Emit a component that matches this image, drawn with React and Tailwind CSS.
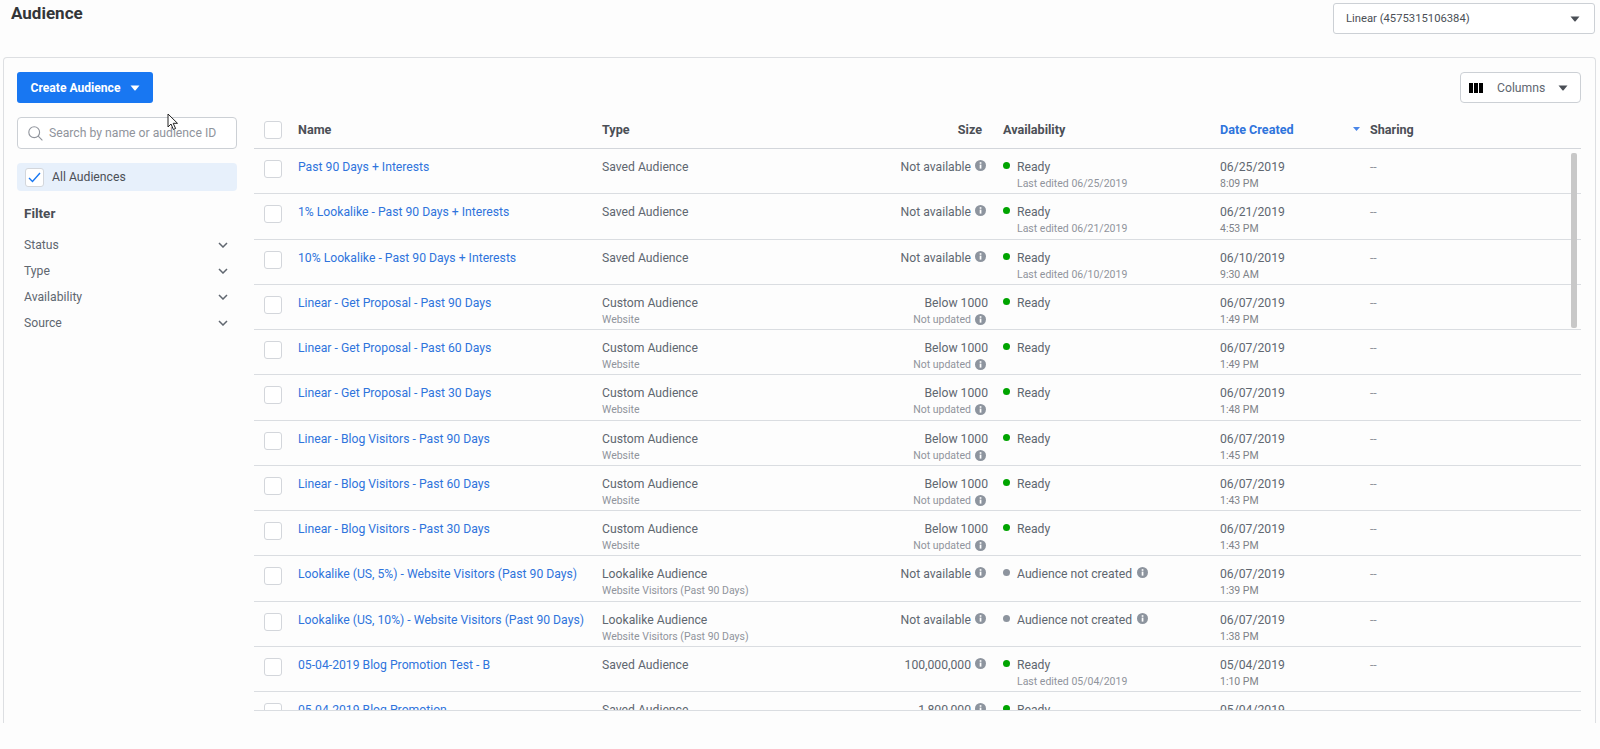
const rows = [
  { name: 'Past 90 Days + Interests', type: 'Saved Audience', size: 'Not available', sizeInfo: true, edited: '06/25/2019', date: '06/25/2019', time: '8:09 PM' },
  { name: '1% Lookalike - Past 90 Days + Interests', type: 'Saved Audience', size: 'Not available', sizeInfo: true, edited: '06/21/2019', date: '06/21/2019', time: '4:53 PM' },
  { name: '10% Lookalike - Past 90 Days + Interests', type: 'Saved Audience', size: 'Not available', sizeInfo: true, edited: '06/10/2019', date: '06/10/2019', time: '9:30 AM' },
  { name: 'Linear - Get Proposal - Past 90 Days', type: 'Custom Audience', sub: 'Website', size: 'Below 1000', updated: true, date: '06/07/2019', time: '1:49 PM' },
  { name: 'Linear - Get Proposal - Past 60 Days', type: 'Custom Audience', sub: 'Website', size: 'Below 1000', updated: true, date: '06/07/2019', time: '1:49 PM' },
  { name: 'Linear - Get Proposal - Past 30 Days', type: 'Custom Audience', sub: 'Website', size: 'Below 1000', updated: true, date: '06/07/2019', time: '1:48 PM' },
  { name: 'Linear - Blog Visitors - Past 90 Days', type: 'Custom Audience', sub: 'Website', size: 'Below 1000', updated: true, date: '06/07/2019', time: '1:45 PM' },
  { name: 'Linear - Blog Visitors - Past 60 Days', type: 'Custom Audience', sub: 'Website', size: 'Below 1000', updated: true, date: '06/07/2019', time: '1:43 PM' },
  { name: 'Linear - Blog Visitors - Past 30 Days', type: 'Custom Audience', sub: 'Website', size: 'Below 1000', updated: true, date: '06/07/2019', time: '1:43 PM' },
  { name: 'Lookalike (US, 5%) - Website Visitors (Past 90 Days)', type: 'Lookalike Audience', sub: 'Website Visitors (Past 90 Days)', size: 'Not available', sizeInfo: true, notCreated: true, date: '06/07/2019', time: '1:39 PM' },
  { name: 'Lookalike (US, 10%) - Website Visitors (Past 90 Days)', type: 'Lookalike Audience', sub: 'Website Visitors (Past 90 Days)', size: 'Not available', sizeInfo: true, notCreated: true, date: '06/07/2019', time: '1:38 PM' },
  { name: '05-04-2019 Blog Promotion Test - B', type: 'Saved Audience', size: '100,000,000', sizeInfo: true, edited: '05/04/2019', date: '05/04/2019', time: '1:10 PM' },
  { name: '05-04-2019 Blog Promotion', type: 'Saved Audience', size: '1,800,000', sizeInfo: true, edited: '05/04/2019', date: '05/04/2019', time: '1:07 PM' },
]

const filters = ['Status', 'Type', 'Availability', 'Source']

function Caret({ className }) {
  return (
    <svg width="10" height="6" viewBox="0 0 10 6" className={className}>
      <path d="M0.5 0.5h9L5.6 5.2a.8.8 0 0 1-1.2 0z" fill="currentColor" />
    </svg>
  )
}

function Info() {
  return (
    <svg width="11" height="11" viewBox="0 0 11 11" className="mt-[-3px] shrink-0">
      <circle cx="5.5" cy="5.5" r="5.5" fill="#8d949e" />
      <rect x="4.7" y="4.6" width="1.7" height="4" fill="#fff" />
      <rect x="4.7" y="2.2" width="1.7" height="1.6" fill="#fff" />
    </svg>
  )
}

function Box({ className = '' }) {
  return <div className={`size-[18px] rounded-[3px] border border-[#d3d6db] bg-white ${className}`} />
}

function Row({ row }) {
  return (
    <div className="grid h-[45.25px] shrink-0 grid-cols-[44px_304px_386px_15px_217px_150px_1fr] border-b border-[#dadde1] pt-[10px] text-[12.2px] leading-4">
      <Box className="mt-[1px] ml-[10px]" />
      <div className="whitespace-nowrap text-[#2f74dc]">{row.name}</div>
      <div className="col-span-1 flex justify-between">
        <div>
          <div>{row.type}</div>
          {row.sub && <div className="mt-[1px] text-[10.5px] text-[#90949c]">{row.sub}</div>}
        </div>
        <div className="text-right">
          <div className={row.sizeInfo ? 'flex items-center justify-end gap-[4px] pr-[2px]' : ''}>
            {row.size}
            {row.sizeInfo && <Info />}
          </div>
          {row.updated && (
            <div className="mt-[1px] flex items-center justify-end gap-[4px] pr-[2px] text-[10.5px] text-[#90949c]">
              Not updated
              <span className="mt-[2px] flex">
                <Info />
              </span>
            </div>
          )}
        </div>
      </div>
      <div />
      <div className="relative pl-[14px]">
        <span className={`absolute top-[3px] left-0 size-[7px] rounded-full ${row.notCreated ? 'bg-[#8d949e]' : 'bg-[#00a400]'}`} />
        {row.notCreated ? (
          <div className="flex items-center gap-[5px]">
            Audience not created
            <Info />
          </div>
        ) : (
          <div>Ready</div>
        )}
        {row.edited && <div className="mt-[1px] text-[10.5px] text-[#90949c]">Last edited {row.edited}</div>}
      </div>
      <div>
        <div>{row.date}</div>
        <div className="mt-[1px] text-[10.5px] text-[#7f8389]">{row.time}</div>
      </div>
      <div className="text-[#90949c]">--</div>
    </div>
  )
}

function App() {
  return (
    <div className="h-[749px] overflow-hidden bg-[#fdfdfd] font-['Roboto',sans-serif] text-[#606770]">
      <div className="flex h-[57px] items-start justify-between pr-[5px] pl-[11px]">
        <h1 className="text-[17px] leading-[27px] font-bold text-[#333538]">Audience</h1>
        <button className="mt-[3px] flex h-[31px] w-[262px] items-center justify-between rounded-[3px] border border-[#ccd0d5] bg-white pt-[1px] pr-[14px] pl-[12px] text-[11.25px] text-[#4b4f56]">
          Linear (4575315106384)
          <Caret className="text-[#4b4f56]" />
        </button>
      </div>

      <div className="relative mx-[3px] h-[666px] w-[1593px] rounded-t-[4px] border-x border-t border-[#dddfe2] pt-[14px] pr-[14px] pl-[13px]">
        <div className="flex h-[31px] items-center justify-between">
          <button className="flex h-[31px] w-[136px] items-center justify-center gap-[10px] rounded-[3px] bg-[#1877f2] pt-[1px] pl-[1px] text-[12.1px] font-bold text-white">
            Create Audience
            <Caret />
          </button>
          <button className="flex h-[31px] w-[121px] items-center rounded-[4px] border border-[#ccd0d5] bg-white pt-[1px] pl-[8px] text-[12.2px] text-[#606770]">
            <span className="flex gap-[1px]">
              <i className="block h-[10px] w-[4px] bg-black" />
              <i className="block h-[10px] w-[4px] bg-black" />
              <i className="block h-[10px] w-[4px] bg-black" />
            </span>
            <span className="ml-[14px]">Columns</span>
            <Caret className="ml-[13px] text-[#4b4f56]" />
          </button>
        </div>

        <div className="mt-[9px] flex gap-[17px]">
          <aside className="w-[220px] shrink-0 pt-[5px]">
            <div className="flex h-[32px] items-center gap-[6px] rounded-[4px] border border-[#ccd0d5] bg-white pl-[10px] text-[12.2px] text-[#90949c]">
              <svg width="15" height="15" viewBox="0 0 15 15" fill="none" stroke="#90949c" strokeWidth="1.1">
                <circle cx="6.2" cy="6.2" r="5.4" />
                <path d="M10.2 10.2l4.2 4.2" />
              </svg>
              Search by name or audience ID
            </div>
            <div className="mt-[14px] flex h-[28px] items-center gap-[8px] rounded-[4px] bg-[#e7f0fb] pl-[8px] text-[12.2px] text-[#4b4f56]">
              <div className="flex size-[19px] items-center justify-center rounded-[3px] border border-[#d3d6db] bg-white">
                <svg width="13" height="11" viewBox="0 0 13 11" fill="none" stroke="#1877f2" strokeWidth="1.4">
                  <path d="M1 6l3.5 3.5L12 1" />
                </svg>
              </div>
              All Audiences
            </div>
            <div className="mt-[13px] pl-[7px] text-[13.5px] leading-[18px] font-bold text-[#4b4f56]">Filter</div>
            <div className="mt-[10px] flex flex-col">
              {filters.map((f) => (
                <div key={f} className="flex h-[26px] items-center justify-between pr-[9px] pl-[7px] text-[12.2px]">
                  {f}
                  <svg width="10" height="6" viewBox="0 0 10 6" fill="none" stroke="#606770" strokeWidth="1.5">
                    <path d="M1 1l4 4 4-4" />
                  </svg>
                </div>
              ))}
            </div>
          </aside>

          <div className="relative w-[1327px] shrink-0">
            <div className="grid h-[37px] grid-cols-[44px_304px_386px_15px_217px_150px_1fr] items-center border-b border-[#d3d6db] text-[12.6px] font-bold text-[#4b4f56]">
              <Box className="ml-[10px]" />
              <div>Name</div>
              <div className="flex justify-between pr-[6px]">
                <span>Type</span>
                <span>Size</span>
              </div>
              <div />
              <div>Availability</div>
              <div className="relative text-[#2f74dc]">
                Date Created
                <svg width="7" height="4" viewBox="0 0 7 4" className="absolute top-[6px] left-[133px]">
                  <path d="M0 0h7L3.5 4z" fill="#4a86e8" />
                </svg>
              </div>
              <div>Sharing</div>
            </div>
            <div className="flex h-[562px] flex-col overflow-hidden border-b border-[#dadde1]">
              {rows.map((r) => (
                <Row key={r.name} row={r} />
              ))}
            </div>
            <div className="absolute top-[41px] right-[4px] h-[175px] w-[6px] rounded-[2px] bg-[#c8c8c8]" />
          </div>
        </div>

        <svg width="12" height="18" viewBox="0 0 12 18" className="absolute top-[55px] left-[163px]">
          <path d="M1 1v13l3-3 2.4 5.5 2.2-1-2.4-5.2H10.500z" fill="#fff" stroke="#222" strokeWidth="1" />
        </svg>
      </div>
    </div>
  )
}

export default App
